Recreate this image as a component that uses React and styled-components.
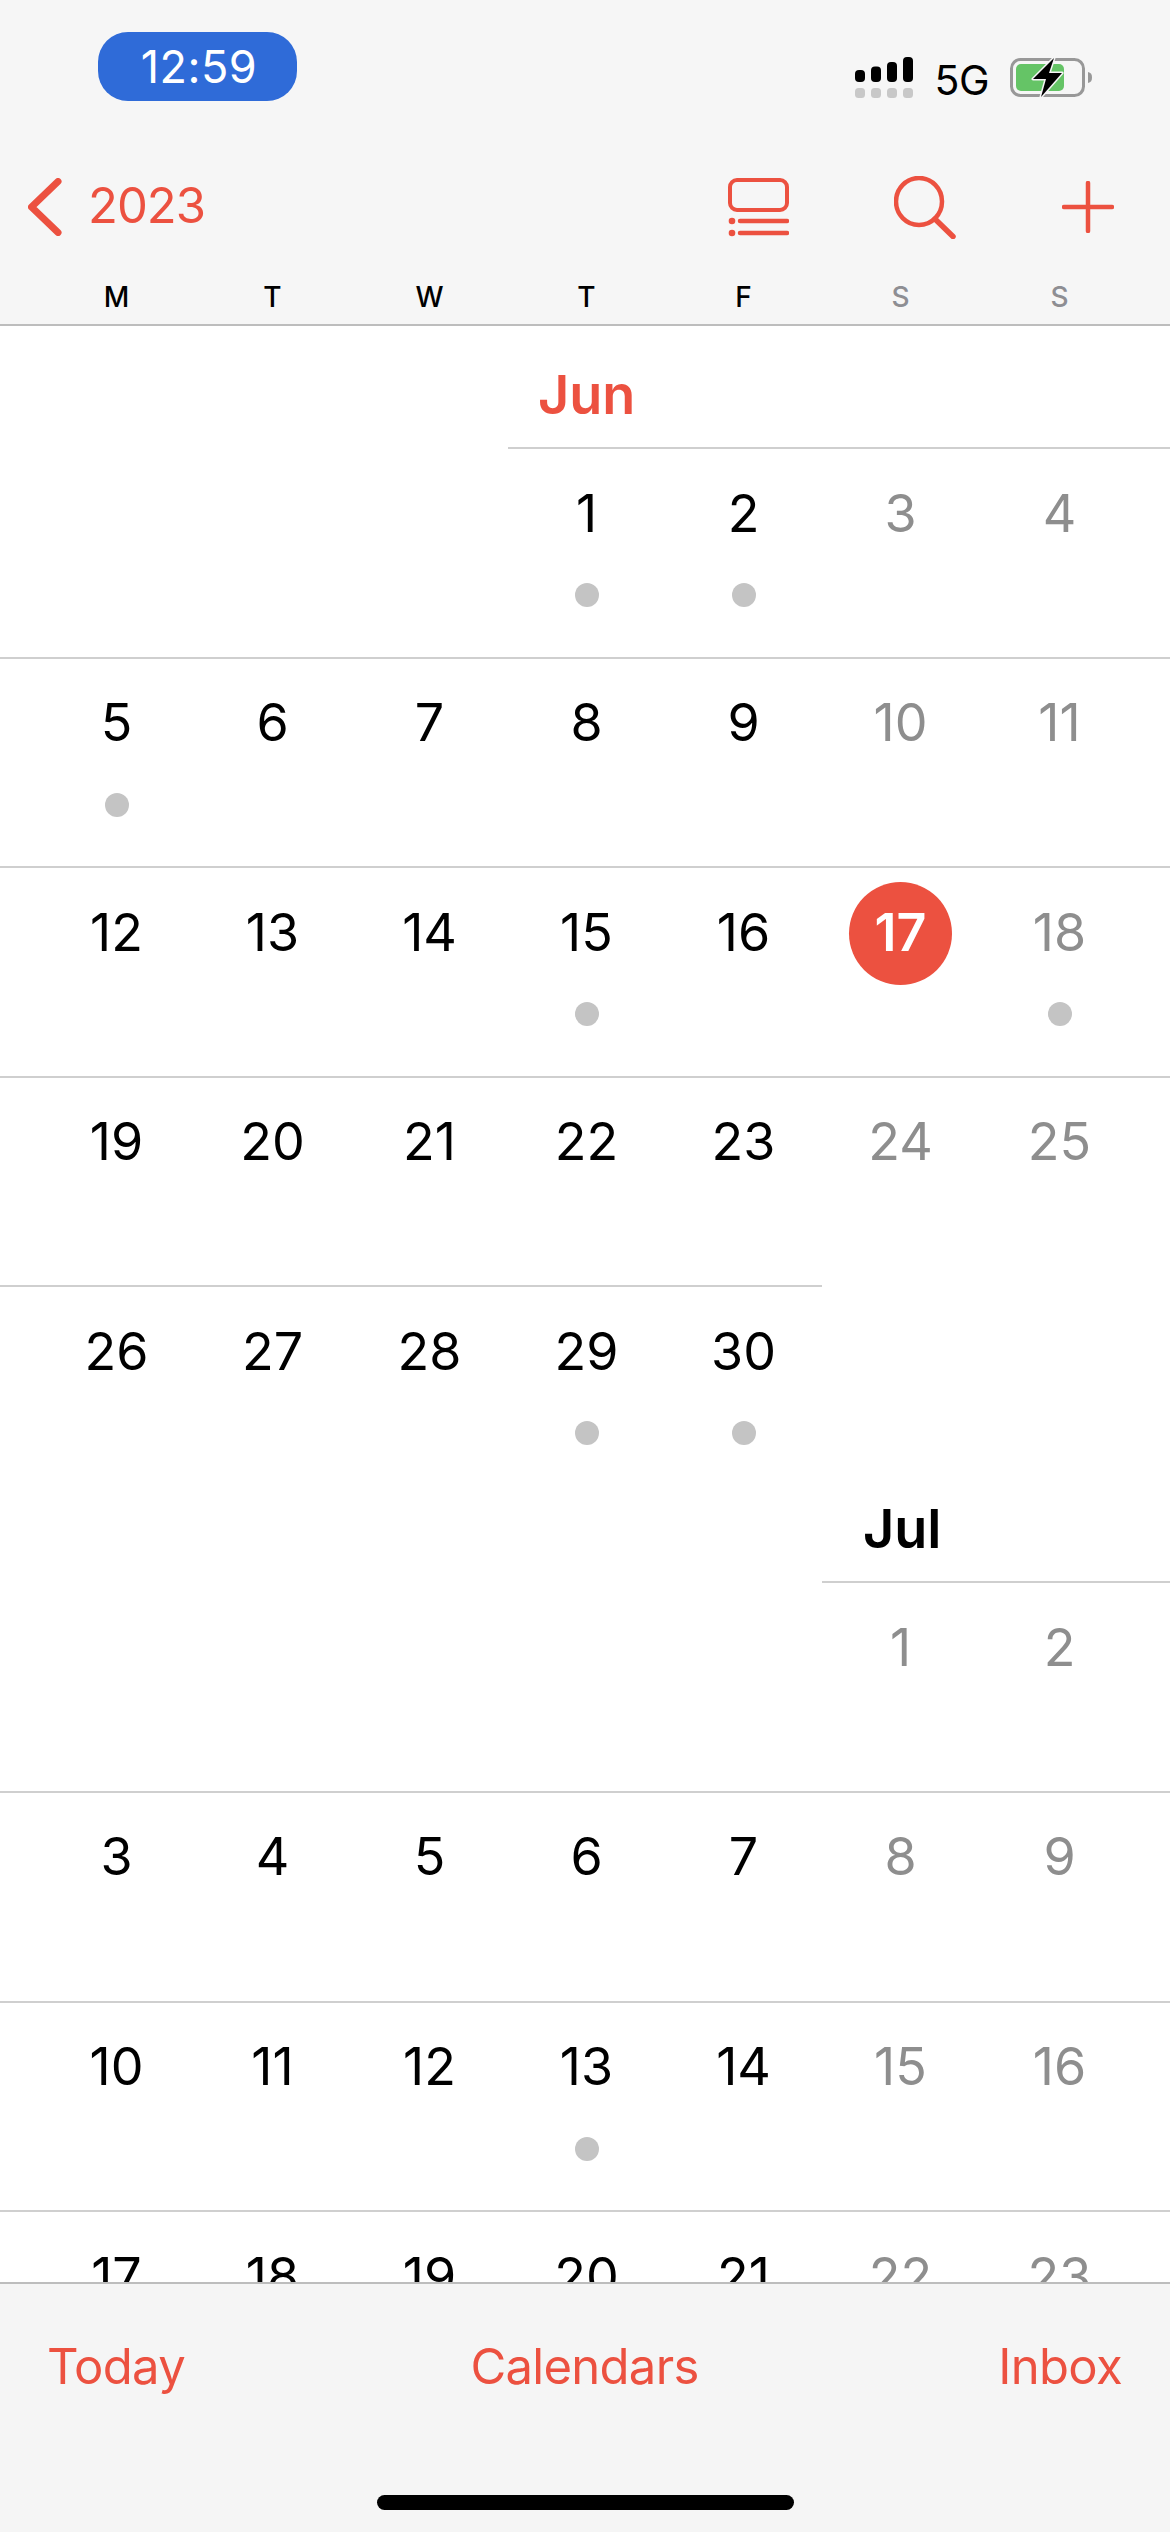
import React from 'react';
import styled, { createGlobalStyle } from 'styled-components';

const RED = '#ec5140';
const FONT = 'Inter, "Liberation Sans", sans-serif';

const Global = createGlobalStyle`
  html, body { margin: 0; padding: 0; background: #fff; }
  * { box-sizing: border-box; }
`;

const Phone = styled.div`
  width: 1170px; height: 2532px; display: flex; flex-direction: column;
  overflow: hidden; background: #fff; font-family: ${FONT}; color: #000;
`;

const Header = styled.header`
  flex: none; height: 326px; background: #f6f6f6; border-bottom: 2px solid #bdbdbd;
  display: flex; flex-direction: column;
`;
const StatusBar = styled.div`
  display: flex; align-items: flex-start; height: 176px; padding: 32px 0 0 98px;
`;
const TimePill = styled.div`
  width: 199px; height: 69px; border-radius: 30px; background: #2f6bd8; color: #fff;
  display: flex; align-items: center; justify-content: center; padding-left: 3px;
  font-size: 45px; font-weight: 400; letter-spacing: 0.5px;
`;
const StatusRight = styled.div`
  margin-left: auto; margin-right: 77px; margin-top: 25px; display: flex; align-items: flex-start;
`;
const Network = styled.span`
  font-size: 41px; line-height: 40px; margin: 3px 21px 0 21px; font-weight: 400; letter-spacing: -0.5px;
`;
const NavBar = styled.nav`
  display: flex; align-items: flex-start; height: 104px; padding-left: 28px;
`;
const BackLabel = styled.span`
  color: ${RED}; font-size: 49px; line-height: 60px; margin-left: 26px; letter-spacing: -1px;
`;
const NavIcons = styled.div`
  margin-left: auto; display: flex; align-items: flex-start; padding-right: 56px;
`;
const NavIcon = styled.svg`
  display: block; flex: none; margin-left: ${p => p.$gap}px; margin-top: ${p => p.$top}px;
`;
const Chevron = styled.svg`
  display: block; flex: none; margin-top: 2px;
`;
const WeekdayRow = styled.div`
  display: grid; grid-template-columns: 194px repeat(5, 157px) 191px;
`;
const Weekday = styled.div`
  text-align: center; font-size: 28px; line-height: 34px; font-weight: 500;
  color: ${p => (p.$weekend ? '#8e8e93' : '#000')};
  &:first-child { padding-left: 39px; }
  &:last-child { padding-right: 30px; }
`;

const Scroller = styled.main`
  flex: 1; min-height: 0; overflow: hidden; background: #fff;
`;
const Row = styled.section`
  display: grid; grid-template-columns: 194px repeat(5, 157px) 191px;
  height: ${p => p.$height}px;
`;
const MonthLabel = styled.div`
  grid-column: ${p => p.$col} / -1;
  align-self: end; padding-left: ${p => p.$pad}px;
  font-size: 54px; line-height: 66px; font-weight: 600; margin-bottom: 19px;
  color: ${p => (p.$current ? RED : '#000')};
`;
const Cell = styled.div`
  display: flex; flex-direction: column; align-items: center; padding-top: 14px;
  border-top: 2px solid #cfcfcf;
  &:first-child { padding-left: 39px; }
  &:last-child { padding-right: 30px; }
`;
const Blank = styled.div``;
const Day = styled.div`
  width: 103px; height: 103px; border-radius: 50%; flex: none;
  display: flex; align-items: center; justify-content: center; padding-bottom: 2px;
  font-size: 52px; line-height: 1;
  font-weight: ${p => (p.$today ? 600 : 400)};
  background: ${p => (p.$today ? RED : 'transparent')};
  color: ${p => (p.$today ? '#fff' : p.$weekend ? '#8e8e8e' : '#000')};
`;
const Dot = styled.i`
  display: block; width: 24px; height: 24px; border-radius: 50%; background: #c4c4c4; margin-top: 17px;
`;

const TabBar = styled.footer`
  flex: none; height: 250px; background: #f5f5f5; border-top: 2px solid #bdbdbd;
  display: flex; flex-direction: column; align-items: center;
`;
const Tabs = styled.div`
  width: 100%; display: grid; grid-template-columns: 1fr auto 1fr; padding: 52px 48px 0 47px;
`;
const Tab = styled.span`
  color: ${RED}; font-size: 49px; line-height: 62px; letter-spacing: -0.7px; justify-self: ${p => p.$align};
`;
const HomeBar = styled.div`
  width: 417px; height: 15px; border-radius: 8px; background: #000; margin-top: 97px;
`;

const WEEKDAYS = ['M', 'T', 'W', 'T', 'F', 'S', 'S'];
const DAY_H = 209.6;

const Week = ({ days, height = DAY_H, dots = [], today, children }) => (
  <Row $height={height}>
    {days.map((d, i) =>
      d === null ? (
        <Blank key={i} />
      ) : (
        <Cell key={i}>
          <Day $weekend={i > 4} $today={d === today}>{d}</Day>
          {dots.includes(d) && <Dot />}
        </Cell>
      )
    )}
    {children}
  </Row>
);

const Signal = () => (
  <svg width="58" height="42" viewBox="0 0 58 42">
    <rect x="0" y="13" width="10" height="12" rx="4" fill="#000" />
    <rect x="16" y="9.5" width="10" height="15.5" rx="4" fill="#000" />
    <rect x="32" y="5" width="10" height="20" rx="4" fill="#000" />
    <rect x="48" y="0" width="10" height="25" rx="4" fill="#000" />
    {[0, 16, 32, 48].map(x => (
      <rect key={x} x={x} y="31" width="10" height="10" rx="3.5" fill="#c8c8c8" />
    ))}
  </svg>
);

const Battery = () => (
  <svg width="83" height="40" viewBox="0 0 83 40" style={{ display: 'block', marginTop: 1 }}>
    <rect x="1.5" y="1.5" width="72" height="36" rx="9" fill="none" stroke="#989898" strokeWidth="3" />
    <path d="M78 14c3 .5 4 2.5 4 5.5s-1 5-4 5.5z" fill="#989898" />
    <rect x="6" y="6" width="48" height="27" rx="5" fill="#65c466" />
    <path d="M44 0 L23 21 H36 L31 39 L52 15 H39 Z" fill="#000" stroke="#f6f6f6" strokeWidth="3" strokeLinejoin="round" paintOrder="stroke" />
  </svg>
);

export default function App() {
  return (
    <Phone>
      <Global />
      <Header>
        <StatusBar>
          <TimePill>12:59</TimePill>
          <StatusRight>
            <Signal />
            <Network>5G</Network>
            <Battery />
          </StatusRight>
        </StatusBar>
        <NavBar>
          <Chevron width="34" height="58" viewBox="0 0 34 58">
            <path d="M30 3.5 L3.5 29 L30 54.5" fill="none" stroke={RED} strokeWidth="7" strokeLinecap="round" strokeLinejoin="round" />
          </Chevron>
          <BackLabel>2023</BackLabel>
          <NavIcons>
            <NavIcon $gap={0} $top={2} width="61" height="59" viewBox="0 0 61 59" fill="none" stroke={RED}>
              <rect x="2" y="2" width="57" height="30" rx="7" strokeWidth="4" />
              <path d="M12 43H59M12 55H59" strokeWidth="4.5" strokeLinecap="round" />
              <circle cx="4" cy="43" r="3.3" fill={RED} stroke="none" />
              <circle cx="4" cy="55" r="3.3" fill={RED} stroke="none" />
            </NavIcon>
            <NavIcon $gap={105} $top={0} width="62" height="63" viewBox="0 0 62 63" fill="none" stroke={RED}>
              <ellipse cx="25" cy="25.5" rx="23" ry="23.5" strokeWidth="4.5" />
              <path d="M41 43 L59 60.5" strokeWidth="5.5" strokeLinecap="round" />
            </NavIcon>
            <NavIcon $gap={106} $top={5} width="52" height="52" viewBox="0 0 52 52" fill="none" stroke={RED}>
              <path d="M26 2V50M2 26H50" strokeWidth="4.5" strokeLinecap="round" />
            </NavIcon>
          </NavIcons>
        </NavBar>
        <WeekdayRow>
          {WEEKDAYS.map((w, i) => (
            <Weekday key={i} $weekend={i > 4}>{w}</Weekday>
          ))}
        </WeekdayRow>
      </Header>
      <Scroller>
        <Row $height={121}>
          <MonthLabel $col={4} $pad={30} $current>Jun</MonthLabel>
        </Row>
        <Week days={[null, null, null, 1, 2, 3, 4]} dots={[1, 2]} />
        <Week days={[5, 6, 7, 8, 9, 10, 11]} dots={[5]} />
        <Week days={[12, 13, 14, 15, 16, 17, 18]} dots={[15, 18]} today={17} />
        <Week days={[19, 20, 21, 22, 23, 24, 25]} />
        <Week days={[26, 27, 28, 29, 30]} dots={[29, 30]} height={296}>
          <MonthLabel $col={6} $pad={41}>Jul</MonthLabel>
        </Week>
        <Week days={[null, null, null, null, null, 1, 2]} />
        <Week days={[3, 4, 5, 6, 7, 8, 9]} />
        <Week days={[10, 11, 12, 13, 14, 15, 16]} dots={[13]} />
        <Week days={[17, 18, 19, 20, 21, 22, 23]} />
      </Scroller>
      <TabBar>
        <Tabs>
          <Tab $align="start">Today</Tab>
          <Tab $align="center">Calendars</Tab>
          <Tab $align="end">Inbox</Tab>
        </Tabs>
        <HomeBar />
      </TabBar>
    </Phone>
  );
}
